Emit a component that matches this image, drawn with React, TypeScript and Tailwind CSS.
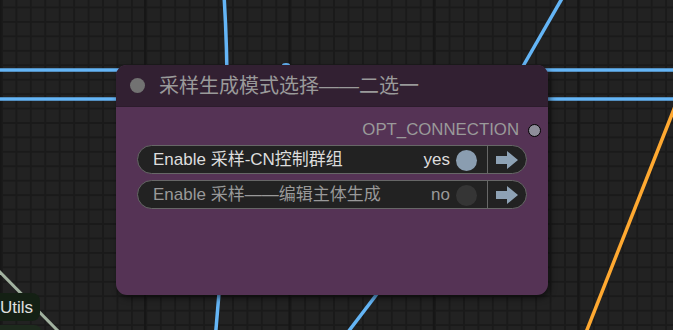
import React from "react";

const font = "font-['Liberation_Sans','Noto_Sans_CJK_SC',sans-serif]";

// Toggle widgets shown inside the node
const toggles = [
  { label: "Enable 采样-CN控制群组", on: true },
  { label: "Enable 采样——编辑主体生成", on: false },
];

function ArrowIcon() {
  return (
    <svg width="22" height="18" viewBox="0 0 22 18" className="shrink-0">
      <polygon points="0,5 11,5 11,0 22,9 11,18 11,13 0,13" fill="#8ea2b5" />
    </svg>
  );
}

function ToggleRow({ label, on }: { label: string; on: boolean }) {
  const tone = on ? "text-[#dddddd]" : "text-[#999999]";
  return (
    <div className="flex h-[29px] w-[390px] items-center rounded-full border border-[#676767] bg-[#222222]">
      <div className="flex h-full flex-1 items-center pl-[15px] pr-[10px]">
        <span className={`whitespace-nowrap text-[17px] leading-none ${tone}`}>{label}</span>
        <div className="flex-1" />
        <span className={`text-[17px] leading-none ${tone}`}>{on ? "yes" : "no"}</span>
        <div className={`ml-[6px] mt-[2px] h-[21px] w-[21px] shrink-0 rounded-full ${on ? "bg-[#8a9db0]" : "bg-[#353535]"}`} />
      </div>
      <div className="flex h-full w-[39px] shrink-0 items-center justify-center border-l border-[#676767]">
        <ArrowIcon />
      </div>
    </div>
  );
}

export default function App() {
  return (
    <div
      className={`relative h-[330px] w-[673px] overflow-hidden bg-[#222222] ${font} [background-image:linear-gradient(to_right,#161616_0_2px,transparent_2px),linear-gradient(to_right,#1a1a1a_0_1.5px,transparent_1.5px),linear-gradient(to_bottom,#1a1a1a_0_1.5px,transparent_1.5px)] [background-size:144.4px_100%,14.44px_100%,100%_14.44px] [background-position:144px_0,1px_0,0_6.5px]`}
    >
      {/* links between nodes */}
      <svg className="absolute inset-0" width="673" height="330" viewBox="0 0 673 330">
        <line x1="-5" y1="70" x2="680" y2="70" stroke="#64b5f6" strokeWidth="3.5" />
        <line x1="-5" y1="99" x2="680" y2="99" stroke="#64b5f6" strokeWidth="3.5" />
        <path d="M224 -5 C 230 90, 228 200, 215 340" fill="none" stroke="#64b5f6" strokeWidth="3.5" />
        <path d="M564 -5 L 522 68" fill="none" stroke="#64b5f6" strokeWidth="3.5" />
        <path d="M380 290 L 345 336" fill="none" stroke="#64b5f6" strokeWidth="3.5" />
        <ellipse cx="286" cy="65" rx="4" ry="2" fill="#64b5f6" />
        <path d="M676 104 L 585 335" fill="none" stroke="#ffa931" strokeWidth="3.5" />
        <path d="M-5 267 L 62 335" fill="none" stroke="#a2b2a0" strokeWidth="3" />
      </svg>

      {/* Utils group node (partly off screen) */}
      <div className="absolute left-[-12px] top-[293px] flex h-[28px] w-[52px] items-center rounded-[8px] bg-[#142014] pl-[12px]">
        <span className="text-[17px] leading-none text-[#e0e0e0]">Utils</span>
      </div>
      <div className="absolute left-[-12px] top-[325px] h-[20px] w-[54px] rounded-[8px] bg-[#1d2a1d]" />

      {/* selector node */}
      <div className="absolute left-[116px] top-[65px] flex h-[230px] w-[432px] flex-col overflow-hidden rounded-[11px] bg-[#553355] shadow-[2px_3px_6px_rgba(0,0,0,0.55)]">
        <div className="flex h-[42px] shrink-0 items-center border-b border-[#2c1c2c] bg-[#322032] pl-[14px]">
          <div className="h-[15px] w-[15px] shrink-0 rounded-full bg-[#727272]" />
          <span className="ml-[14px] text-[20px] leading-none text-[#9a9a9a]">采样生成模式选择——二选一</span>
        </div>
        <div className="flex flex-col items-center pt-[9px]">
          <div className="flex h-[28px] w-full items-center justify-end pr-[7px]">
            <span className="text-[16.8px] leading-none text-[#9a9a9a]">OPT_CONNECTION</span>
            <div className="ml-[9px] h-[13px] w-[13px] shrink-0 rounded-full border-[1.5px] border-black bg-[#8e8e9a]" />
          </div>
          <div className="mt-[1px] flex flex-col gap-[6px]">
            {toggles.map((t) => (
              <ToggleRow key={t.label} label={t.label} on={t.on} />
            ))}
          </div>
        </div>
      </div>
    </div>
  );
}
